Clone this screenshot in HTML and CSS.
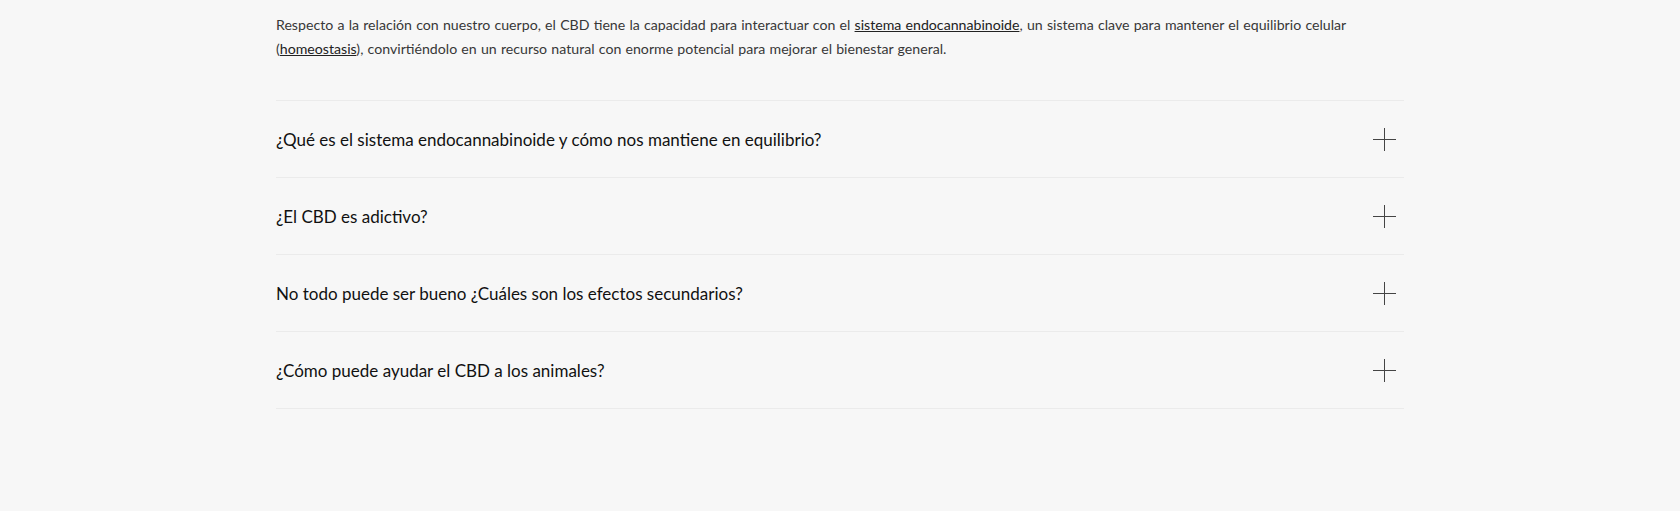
FILE: index.html
```html
<!DOCTYPE html>
<html lang="es">
<head>
<meta charset="utf-8">
<title>CBD</title>
<link rel="stylesheet" href="styles.css">
</head>
<body>
<main class="wrap">
  <p class="intro">Respecto a la relación con nuestro cuerpo, el CBD tiene la capacidad para interactuar con el <a href="#">sistema endocannabinoide</a>, un sistema clave para mantener el equilibrio celular (<a href="#">homeostasis</a>), convirtiéndolo en un recurso natural con enorme potencial para mejorar el bienestar general.</p>
  <section class="faq">
    <div class="item"><span class="q">¿Qué es el sistema endocannabinoide y cómo nos mantiene en equilibrio?</span><span class="plus"></span></div>
    <div class="item"><span class="q">¿El CBD es adictivo?</span><span class="plus"></span></div>
    <div class="item"><span class="q">No todo puede ser bueno ¿Cuáles son los efectos secundarios?</span><span class="plus"></span></div>
    <div class="item"><span class="q">¿Cómo puede ayudar el CBD a los animales?</span><span class="plus"></span></div>
  </section>
</main>
</body>
</html>
```
FILE: styles.css
```css
html, body {
  margin: 0;
  padding: 0;
  background: #f7f7f7;
}
body {
  font-family: "Lato", "Liberation Sans", sans-serif;
  color: #222;
}
.wrap {
  width: 1128px;
  margin: 0 auto;
  padding-top: 13px;
}
.intro {
  margin: 0 0 39px;
  max-width: 1100px;
  font-size: 14.15px;
  word-spacing: 0.6px;
  line-height: 24px;
  color: #383838;
}
.intro a {
  color: #222;
  text-decoration: underline;
  text-decoration-thickness: 1px;
}
.faq {
  border-top: 1px solid #ebebeb;
}
.item {
  height: 76px;
  border-bottom: 1px solid #ebebeb;
  display: flex;
  align-items: center;
  justify-content: space-between;
  padding-right: 8px;
}
.q {
  font-size: 17px;
  color: #111;
}
.plus {
  position: relative;
  width: 23px;
  height: 23px;
}
.plus::before, .plus::after {
  content: "";
  position: absolute;
  background: #444;
}
.plus::before {
  left: 0;
  right: 0;
  top: 11px;
  height: 1px;
}
.plus::after {
  top: 0;
  bottom: 0;
  left: 11px;
  width: 1px;
}
```
